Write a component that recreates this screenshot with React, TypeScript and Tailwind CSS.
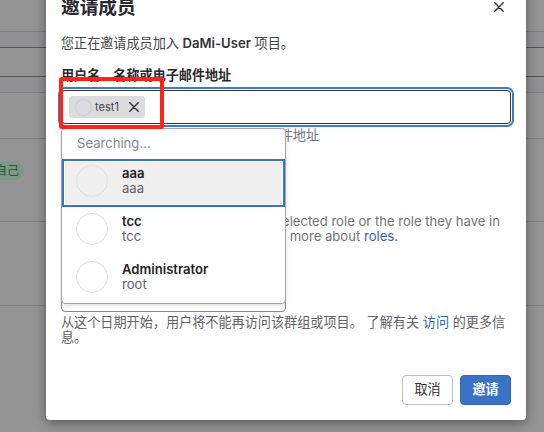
interface Member {
  name: string;
  username: string;
}

const members: Member[] = [
  { name: "aaa", username: "aaa" },
  { name: "tcc", username: "tcc" },
  { name: "Administrator", username: "root" },
];

function CloseIcon({ className }: { className: string }) {
  return (
    <svg viewBox="0 0 10 10" className={className} fill="none" stroke="currentColor" strokeWidth="1.4" strokeLinecap="round">
      <path d="M.8.8l8.4 8.4M9.2.8L.8 9.2" />
    </svg>
  );
}

function PageBackground() {
  return (
    <div className="flex h-full flex-col">
      <div className="h-[31px]" />
      <div className="h-[17px] border-t border-b border-t-[#7e7e7e] border-b-[#555555] bg-[#919194]" />
      <div className="h-7" />
      <div className="h-[17px] border-t border-b border-t-[#555555] border-b-[#7e7e7e] bg-[#919194]" />
      <div className="h-[46px] border-b border-[#7e7e7e]" />
      <div className="flex h-[83px] items-start border-b border-[#7e7e7e] pt-[23px]">
        <span className="-ml-3 flex h-[18px] w-9 items-center justify-end rounded-full bg-[#7d9884] pr-[5px] text-[12px] text-[#24563a]">
          自己
        </span>
      </div>
      <div className="h-[84px] border-b border-[#7e7e7e]" />
    </div>
  );
}

function MemberDropdown() {
  return (
    <div className="absolute top-[37px] -left-px z-10 w-[225px] rounded-[4px] border border-[#a4a3a8] bg-white shadow-[0_2px_4px_rgba(0,0,0,0.12)]">
      <div className="flex h-[30px] items-center pl-[15px] text-[13.1px] text-[#89888d]">Searching...</div>
      {members.map((member, i) => (
        <div
          key={member.name}
          className={`flex h-12 items-start gap-3.5 border-2 pt-1 pl-3 ${
            i === 0 ? "border-[#3a74ca] bg-[#efefef] shadow-[inset_0_0_0_1px_#fff]" : "border-transparent"
          }`}
        >
          <span className="h-8 w-8 rounded-full border border-[#e0e0e0]" />
          <div className="pt-px text-[13.1px] leading-[15px]">
            <div className="font-semibold text-[#1f1e24]">{member.name}</div>
            <div className="text-[#626168]">{member.username}</div>
          </div>
        </div>
      ))}
    </div>
  );
}

function MemberInput() {
  return (
    <div className="relative mt-[6px] flex h-[34px] items-center rounded-[4px] border border-[#333238] pl-[7px] shadow-[0_0_0_1px_#fff,0_0_0_3px_#3f78cc]">
      <span className="flex h-[22px] w-[76px] items-center rounded-[3px] bg-[#dcdcde] pl-1.5 text-[#45444b]">
        <span className="h-[17px] w-[17px] rounded-full border border-[#cdcdcf]" />
        <span className="ml-[3px] text-[11.1px]">test1</span>
        <CloseIcon className="ml-auto mr-[6px] h-[10px] w-[10px] text-[#333238]" />
      </span>
      <MemberDropdown />
      <span className="absolute -top-[14px] -left-[3px] z-20 h-[52px] w-[105px] rounded-[3px] border-4 border-[#ff2415]" />
    </div>
  );
}

function InviteDialog() {
  return (
    <div className="absolute -top-5 left-[46px] flex h-[440px] w-[480px] flex-col rounded-[4px] bg-white px-[15px] shadow-[0_3px_12px_rgba(0,0,0,0.4)]">
      <div className="flex items-center justify-between pt-[14px]">
        <h2 className="pt-px text-[18.7px] leading-[25px] font-bold text-[#28272d]">邀请成员</h2>
        <CloseIcon className="mr-[7px] h-[10px] w-[10px] text-[#333238]" />
      </div>
      <p className="mt-[14px] text-[13.1px] leading-[18px] text-[#45444b]">
        您正在邀请成员加入 <strong className="font-semibold text-[#333238]">DaMi-User</strong> 项目。
      </p>
      <label className="mt-[14px] text-[13.1px] leading-[18px] font-bold text-[#28272d]">用户名、名称或电子邮件地址</label>
      <MemberInput />
      <p className="mt-[3px] w-[258px] text-right text-[13.1px] leading-4 text-[#737278]">输入用户名、名称或电子邮件地址</p>
      <p className="mt-[71px] w-[439px] text-right text-[13.1px] leading-[15px] whitespace-nowrap text-[#737278]">
        Invited members are assigned the selected role or the role they have in
      </p>
      <p className="w-[337px] text-right text-[13.1px] leading-[15px] whitespace-nowrap text-[#737278]">
        the group, whichever is lower. Learn more about <a className="text-[#2f68b4]">roles</a>.
      </p>
      <div className="mt-[38px] h-[30px] w-[225px] shrink-0 rounded-[4px] border border-[#89888d]" />
      <p className="mt-[3px] w-[450px] text-[13.13px] leading-[15px] whitespace-nowrap text-[#626168]">
        从这个日期开始，用户将不能再访问该群组或项目。 了解有关 <a className="text-[#2f68b4]">访问</a> 的更多信
        <br />
        息。
      </p>
      <div className="mt-auto mb-[15px] flex justify-end gap-[7px] text-[13.1px]">
        <button className="h-[30px] w-[51px] rounded-[4px] border border-[#bfbfc3] text-[#333238]">取消</button>
        <button className="h-[30px] w-[51px] rounded-[4px] border border-[#2f68b4] bg-[#3a72c8] font-bold text-white">邀请</button>
      </div>
    </div>
  );
}

export default function App() {
  return (
    <div className="relative h-[432px] w-[544px] overflow-hidden bg-[#949494] font-[Inter,'Noto_Sans_CJK_SC',sans-serif]">
      <PageBackground />
      <InviteDialog />
    </div>
  );
}
